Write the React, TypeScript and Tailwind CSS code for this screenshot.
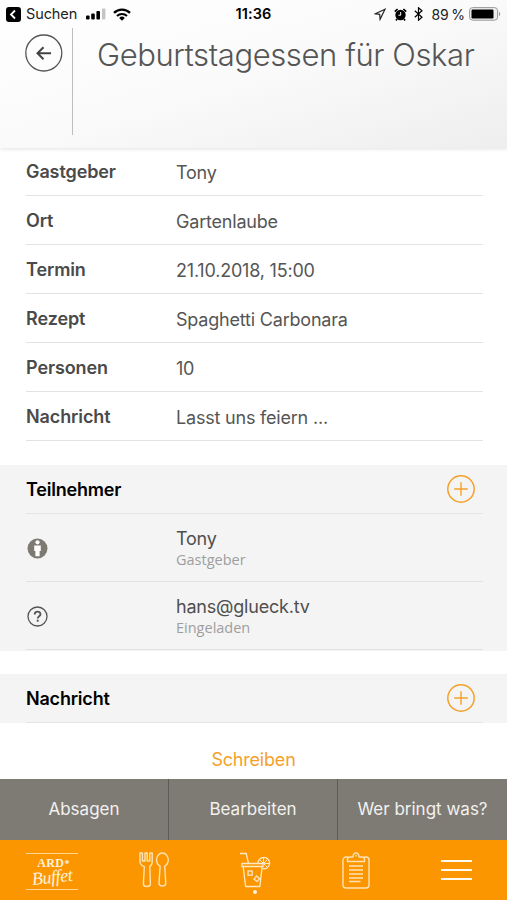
import type { ReactNode } from 'react';

const details = [
  { label: 'Gastgeber', value: 'Tony', labelSpacing: 'tracking-[-0.1px]', valueSpacing: 'tracking-[-0.2px]' },
  { label: 'Ort', value: 'Gartenlaube', labelSpacing: 'tracking-[-0.1px]', valueSpacing: 'tracking-[-0.2px]' },
  { label: 'Termin', value: '21.10.2018, 15:00', labelSpacing: 'tracking-[-0.1px]', valueSpacing: 'tracking-[-0.2px]' },
  { label: 'Rezept', value: 'Spaghetti Carbonara', labelSpacing: 'tracking-[-0.1px]', valueSpacing: 'tracking-[-0.2px]' },
  { label: 'Personen', value: '10', labelSpacing: 'tracking-[-0.1px]', valueSpacing: 'tracking-[-0.2px]' },
  { label: 'Nachricht', value: 'Lasst uns feiern ...', labelSpacing: 'tracking-[-0.1px]', valueSpacing: 'tracking-[-0.2px]' },
];

function StatusBar() {
  return (
    <div className="flex h-7 items-center pl-[6px] pr-[6px] text-black">
      <div className="flex flex-1 items-center">
        <svg width="15" height="15" viewBox="0 0 15 15">
          <rect width="15" height="15" rx="3" fill="#000" />
          <path d="M9 3.5 5 7.5l4 4" fill="none" stroke="#fff" strokeWidth="1.8" />
        </svg>
        <span className="ml-[5px] text-[14.5px] tracking-[-0.1px] text-[#222]">Suchen</span>
        <svg className="ml-[9px]" width="20" height="12" viewBox="0 0 20 12">
          <rect x="0" y="7.5" width="3.6" height="4" rx="1" />
          <rect x="5.2" y="5.5" width="3.6" height="6" rx="1" />
          <rect x="10.4" y="3" width="3.6" height="8.5" rx="1" />
          <rect x="16" y="0.5" width="3.4" height="11" rx="1" fill="#c4c4c4" />
        </svg>
        <svg className="ml-[7px]" width="18" height="13" viewBox="0 0 18 13">
          <path d="M1 4.8a11.5 11.5 0 0 1 16 0" fill="none" stroke="#000" strokeWidth="2.3" />
          <path d="M4 8a7.2 7.2 0 0 1 10 0" fill="none" stroke="#000" strokeWidth="2.1" />
          <path d="M9 12.7 6.2 9.9a4 4 0 0 1 5.6 0Z" />
        </svg>
      </div>
      <span className="text-[14.5px] font-semibold tracking-[0.1px]">11:36</span>
      <div className="flex flex-1 items-center justify-end">
        <svg width="12" height="13" viewBox="0 0 12 13">
          <path d="M11 1.2 1.2 5.8l4.5.6.4 4.9Z" fill="none" stroke="#222" strokeWidth="1.2" />
        </svg>
        <svg className="ml-2" width="13" height="13" viewBox="0 0 13 13">
          <circle cx="6.5" cy="7" r="5.2" />
          <path d="M.8 3.6 3.6 1M12.2 3.6 9.4 1M3 11l-1 1.5M10 11l1 1.5" stroke="#000" strokeWidth="1.7" />
          <path d="M6.7 4v3.2H4.4" fill="none" stroke="#fff" strokeWidth="1" />
        </svg>
        <svg className="ml-[7px]" width="9" height="14" viewBox="0 0 9 14">
          <path d="m.8 3.8 7.2 6.4-3.5 3V.8L8 3.8.8 10.2" fill="none" stroke="#000" strokeWidth="1.2" />
        </svg>
        <span className="ml-2 text-[14px] tracking-[0px] text-[#222]">89&#8201;%</span>
        <svg className="ml-1" width="32" height="14" viewBox="0 0 32 14">
          <rect x=".6" y=".6" width="28" height="12.6" rx="3" fill="#eee" stroke="#999" />
          <rect x="2.5" y="2.5" width="22" height="9" rx="1.2" />
          <path d="M30 5c1.6.3 1.6 3.7 0 4Z" fill="#999" />
        </svg>
      </div>
    </div>
  );
}

function PlusButton() {
  return (
    <button aria-label="Hinzufügen">
      <svg width="28" height="28" viewBox="0 0 28 28" fill="none" stroke="#f5a129">
        <circle cx="14" cy="14" r="13.2" strokeWidth="1.5" />
        <path d="M14 7.2v13.6M7.2 14h13.6" strokeWidth="1.4" />
      </svg>
    </button>
  );
}

function SectionHeader({ title }: { title: string }) {
  return (
    <div className="ml-[26px] mr-6 flex h-[49px] items-center justify-between border-b border-[#e5e5e5] pr-2">
      <h2 className="text-[18px] font-semibold tracking-[-0.2px] text-black">{title}</h2>
      <PlusButton />
    </div>
  );
}

function Participant({ name, status, children }: { name: string; status: string; children: ReactNode }) {
  return (
    <div className="ml-[26px] mr-6 flex h-[68px] items-center border-b border-[#e2e2e2]">
      <div className="w-[150px] pl-px pt-[2px]">{children}</div>
      <div className="pt-[2px]">
        <div className="text-[18px] leading-[22px] tracking-[-0.2px] text-[#4f4f4f]">{name}</div>
        <div className="font-['Open_Sans'] text-[14.5px] leading-5 text-[#9e9e9e]">{status}</div>
      </div>
    </div>
  );
}

function TabBar() {
  return (
    <nav className="flex h-[60px] items-center bg-[#fb9600] text-[#ffe9c4]">
      <div className="flex w-[103px] justify-center">
        <div className="mt-[2px] h-[37px] w-[52px] border-y border-[#ffd590] text-center">
          <div className="mt-[3px] pl-1 font-['Liberation_Serif'] text-[12px] font-bold leading-[13px] tracking-[0.4px] text-[#fff2dc]">
            ARD<span className="text-[10px]">*</span>
          </div>
          <div className="-mt-px -rotate-6 font-['Liberation_Serif'] text-[18px] italic leading-[17px] tracking-[-0.4px] text-[#fff2dc]">
            Buffet
          </div>
        </div>
      </div>
      <div className="flex w-[101px] justify-center">
        <svg width="32" height="36" viewBox="0 0 32 36" fill="none" stroke="#ffe3b3" strokeWidth="1.4" strokeLinejoin="round">
          <path d="M2 1h2.4v8H7V1h2.2v8h2.6V1h2.4v9c0 2.3-.9 3.4-2.4 4.6L12.4 32c0 3.3-7 3.3-7 0l.9-17.4C3.2 13.4 2 12 2 10Z" />
          <path d="M24.4 1c-3.4 0-5.8 3.5-5.8 7 0 3 1.3 5 3.5 6.2L21 31.5c0 3.2 6.8 3.2 6.8 0L26.7 14.2C28.9 13 30.2 11 30.2 8c0-3.5-2.4-7-5.8-7Z" />
        </svg>
      </div>
      <div className="flex w-[101px] flex-col items-center pt-[5px]">
        <svg width="32" height="36" viewBox="0 0 32 36" fill="none" stroke="#ffe9c4" strokeWidth="1.3">
          <path d="M1 1.5h6.2l2.3 10M3 11.5h21v3H3ZM4.2 14.5l2.4 20h14.2l2.4-20M19 11.5a5.8 5.8 0 1 1 4.8 5.3" />
          <path d="m24.5 11.5-4-4M24.5 11.5V5.7M24.5 11.5l4-4M24.5 11.5h5.8M24.5 11.5l3.8 3.8" strokeWidth="1" />
          <rect x="9" y="19" width="4.2" height="4.2" />
          <rect x="15.8" y="24.8" width="4" height="4" transform="rotate(40 17.8 26.8)" />
        </svg>
        <span className="mt-[2px] size-[4px] rounded-full bg-[#fff2dc]" />
      </div>
      <div className="flex w-[101px] justify-center">
        <svg width="28" height="37" viewBox="0 0 28 37" fill="none" stroke="#ffe3b3" strokeWidth="1.4" strokeLinejoin="round">
          <path d="M6 5H4a3 3 0 0 0-3 3v25a3 3 0 0 0 3 3h20a3 3 0 0 0 3-3V8a3 3 0 0 0-3-3h-2" />
          <path d="M5.5 9.5V7.2c0-1.4 1-2.2 2.5-2.2h3c.2-5.3 5.8-5.3 6 0h3c1.5 0 2.5.8 2.5 2.2v2.3ZM14 3v1.4" />
          <path d="M7 14h14M7 18h14M7 22h14M7 26h14M7 29.5h11.5" strokeWidth="1.3" />
        </svg>
      </div>
      <div className="flex flex-1 justify-center">
        <svg width="31" height="22" viewBox="0 0 31 22" stroke="#fffaf0" strokeWidth="2.2">
          <path d="M0 2h31M0 11h31M0 20h31" />
        </svg>
      </div>
    </nav>
  );
}

export default function App() {
  return (
    <div className="flex h-[900px] w-[507px] flex-col overflow-hidden bg-white font-['Inter',sans-serif]">
      <header className="h-[148px] shrink-0 bg-linear-to-br from-white via-[#fafafa] to-[#eeeeee] shadow-[0_1px_4px_rgba(0,0,0,0.12)]">
        <StatusBar />
        <div className="flex">
          <div className="flex h-[107px] w-[73px] border-r border-[#bdbdbd] pl-[25px] pt-[6px]">
            <svg width="38" height="38" viewBox="0 0 38 38" fill="none" stroke="#555">
              <circle cx="18.8" cy="19" r="18" strokeWidth="1.3" />
              <path d="M26 19.3H12.5M18.5 13.3l-6 6 6 6" stroke="#444" strokeWidth="2" />
            </svg>
          </div>
          <h1 className="ml-6 pt-[7px] text-[31px] font-light leading-10 tracking-[-0.4px] text-[#555] whitespace-nowrap">
            Geburtstagessen für Oskar
          </h1>
        </div>
      </header>

      <dl className="ml-[26px] mr-6 shrink-0 -mt-px">
        {details.map((row) => (
          <div key={row.label} className="flex h-[49px] items-center border-b border-[#e2e2e2]">
            <dt className={`w-[150px] text-[18px] font-semibold text-[#4a4a4a] ${row.labelSpacing}`}>{row.label}</dt>
            <dd className={`pt-[2px] text-[18px] text-[#555] ${row.valueSpacing}`}>{row.value}</dd>
          </div>
        ))}
      </dl>

      <section className="mt-6 h-[186px] shrink-0 bg-[#f4f4f4]">
        <SectionHeader title="Teilnehmer" />
        <Participant name="Tony" status="Gastgeber">
          <svg width="21" height="21" viewBox="0 0 21 21">
            <circle cx="10.5" cy="10.5" r="10" fill="#7d7a72" />
            <circle cx="10.5" cy="4.3" r="2.1" fill="#fff" />
            <path d="M7.2 7.4h6.6v5.7h-1.2v5.2H8.4v-5.2H7.2Z" fill="#fff" />
          </svg>
        </Participant>
        <Participant name="hans@glueck.tv" status="Eingeladen">
          <svg width="21" height="21" viewBox="0 0 21 21" fill="none" stroke="#555">
            <circle cx="10.5" cy="10.5" r="9.5" strokeWidth="1.3" />
            <path d="M7.7 8.4c0-3.7 5.8-3.5 5.8-.2 0 2.1-2.8 2-2.8 4.2" strokeWidth="1.8" />
            <path d="M10.7 13.7v2" strokeWidth="1.9" />
          </svg>
        </Participant>
      </section>

      <section className="mt-[23px] h-[49px] shrink-0 bg-[#f4f4f4]">
        <SectionHeader title="Nachricht" />
      </section>

      <div className="flex h-[56px] shrink-0 items-center justify-center pt-4">
        <button className="text-[18px] tracking-[-0.2px] text-[#f5a129]">Schreiben</button>
      </div>

      <div className="grid h-[61px] shrink-0 grid-cols-3 divide-x divide-[#5d5b55] bg-[#7e7b74] text-[17px] text-[#f2f1ef]">
        <button>Absagen</button>
        <button>Bearbeiten</button>
        <button>Wer bringt was?</button>
      </div>
      <TabBar />
    </div>
  );
}
